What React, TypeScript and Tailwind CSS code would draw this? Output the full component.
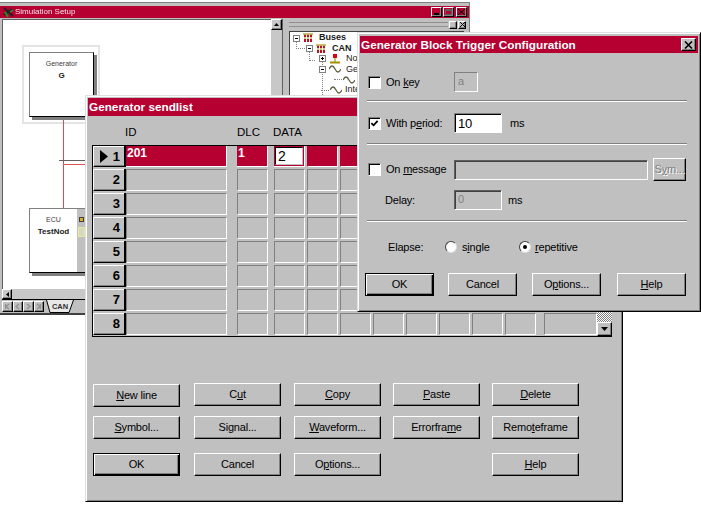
import React from 'react';

// 3d edges used all over the old Windows look
const raised = 'border border-t-white border-l-white border-r-black border-b-black shadow-[inset_-1px_-1px_0_#808080]';
const sunken = 'border border-t-[#808080] border-l-[#808080] border-r-white border-b-white shadow-[inset_1px_1px_0_#000]';

function Btn({ label, u, className = '', def = false }: { label: string; u?: string; className?: string; def?: boolean }) {
  const i = u ? label.indexOf(u) : -1;
  return (
    <div
      className={`h-[23px] flex items-center justify-center text-[11px] tracking-[-0.2px] leading-none text-black ${
        def ? 'border border-black shadow-[inset_1px_1px_0_#fff,inset_-1px_-1px_0_#000,inset_-2px_-2px_0_#808080]' : raised
      } ${className}`}
    >
      <span className="whitespace-pre">
        {i >= 0 ? (
          <>
            {label.slice(0, i)}
            <u className="underline underline-offset-1">{u}</u>
            {label.slice(i + 1)}
          </>
        ) : (
          label
        )}
      </span>
    </div>
  );
}

function Check({ on = false }: { on?: boolean }) {
  return (
    <div className={`w-[13px] h-[13px] bg-white shrink-0 flex items-center justify-center ${sunken}`}>
      {on && (
        <svg width="9" height="9" viewBox="0 0 10 10">
          <path d="M1.5 4.5 L4 7 L8.5 2" fill="none" stroke="#000" strokeWidth="2" />
        </svg>
      )}
    </div>
  );
}

function Radio({ on = false }: { on?: boolean }) {
  return (
    <div className="w-[12px] h-[12px] rounded-full bg-white border border-t-[#404040] border-l-[#404040] border-r-[#dfdfdf] border-b-[#dfdfdf] flex items-center justify-center">
      {on && <div className="w-[4px] h-[4px] rounded-full bg-black" />}
    </div>
  );
}

function Sep({ className = '' }: { className?: string }) {
  return <div className={`h-[2px] bg-white border-t border-[#808080] ${className}`} />;
}

// widths and gaps of the sendlist columns
const cols = [
  'w-[101px]',
  'ml-[10px] w-[31px]',
  'ml-[6px] w-[31px]',
  'ml-[2px] w-[31px]',
  'ml-[2px] w-[31px]',
  'ml-[2px] w-[31px]',
  'ml-[2px] w-[31px]',
  'ml-[2px] w-[31px]',
  'ml-[2px] w-[31px]',
  'ml-[2px] w-[31px]',
  'ml-[8px] w-[53px]',
];

function GridRow({ n, selected = false }: { n: number; selected?: boolean }) {
  return (
    <div className={`flex ${selected ? 'h-[21px]' : 'h-[22px] mt-[2px]'}`}>
      <div className="w-[31px] shrink-0 flex items-center justify-between pl-[6px] pr-[4px] font-bold text-[13px] border-t border-l border-t-white border-l-white border-b border-b-black shadow-[inset_0_-1px_0_#808080]">
        {selected ? (
          <svg width="8" height="13" viewBox="0 0 8 13">
            <path d="M0 0 L8 6.5 L0 13 Z" fill="#000" />
          </svg>
        ) : (
          <span />
        )}
        <span>{n}</span>
      </div>
      <div className="w-[2px] bg-black shrink-0" />
      {cols.map((c, i) => {
        if (selected && i < 3) {
          return (
            <div key={i} className={`${c} shrink-0 bg-[#b50031] border-r border-b border-white text-white font-bold text-[12px] leading-none ${i === 2 ? 'p-[1px]' : 'pl-[1px] pt-[1px]'}`}>
              {i === 0 && '201'}
              {i === 1 && '1'}
              {i === 2 && (
                <div className="h-full bg-white text-black font-normal text-[14px] border border-t-black border-l-black border-r-[#c0c0c0] border-b-[#c0c0c0] pl-[2px] pt-[1px]">2</div>
              )}
            </div>
          );
        }
        return (
          <div
            key={i}
            className={`${c} shrink-0 border ${selected ? 'bg-[#b50031] border-[#b50031] border-r-white border-b-white' : 'border-t-[#808080] border-l-[#808080] border-r-white border-b-white'}`}
          />
        );
      })}
    </div>
  );
}

function BusIcon() {
  return (
    <svg width="11" height="10" viewBox="0 0 11 10" className="shrink-0">
      <path d="M0 1 H10" stroke="#a08000" />
      <path d="M2 1 V8 M5 1 V8 M8 1 V8" stroke="#b08800" />
      <path d="M1 2 h2 v2 h-2z M4 2 h2 v2 h-2z M7 2 h2 v2 h-2z M1 6 h2 v3 h-2z M4 6 h2 v3 h-2z M7 6 h2 v3 h-2z" fill="#c01020" />
    </svg>
  );
}

function NodeIcon() {
  return (
    <svg width="12" height="10" viewBox="0 0 12 10" className="shrink-0">
      <path d="M6 4 V8" stroke="#808000" />
      <path d="M1 8.5 H11" stroke="#a09000" strokeWidth="2" />
      <rect x="4" y="0" width="4" height="4" fill="#e00010" />
    </svg>
  );
}

function WaveIcon() {
  return (
    <svg width="12" height="8" viewBox="0 0 12 8" className="shrink-0">
      <path d="M0 4 C2 0 4 0 6 4 S10 8 12 4" fill="none" stroke="#606040" strokeWidth="1.3" />
    </svg>
  );
}

function TreeBox({ plus = false }: { plus?: boolean }) {
  return (
    <div className="relative w-[7px] h-[7px] border border-[#808080] bg-white shrink-0">
      <div className="absolute left-[1px] top-[2px] w-[3px] h-[1px] bg-black" />
      {plus && <div className="absolute left-[2px] top-[1px] w-[1px] h-[3px] bg-black" />}
    </div>
  );
}

function Block({ className, kind, name, children, textClass = '' }: { className: string; kind: string; name: string; children?: React.ReactNode; textClass?: string }) {
  return (
    <div className={`absolute bg-white border border-t-[#808080] border-l-[#808080] border-r-black border-b-black shadow-[3px_3px_0_#808080] text-center ${className}`}>
      <div className={textClass}>
        <div className="pt-[5px] text-[7px] leading-[12px] text-[#404040]">{kind}</div>
        <div className="text-[8px] leading-[12px] font-bold text-[#202020]">{name}</div>
      </div>
      {children}
    </div>
  );
}

function SimulationWindow() {
  return (
    <div className="absolute left-0 top-[2px] w-[470px] h-[313px] bg-[#c0c0c0] border-t border-t-[#808080] border-r border-r-[#808080] border-b-2 border-b-[#404040] pt-[3px] flex flex-col">
      {/* title bar */}
      <div className="h-[12px] shrink-0 bg-[#b50031] flex items-center pl-[3px] pr-[2px]">
        <svg width="11" height="11" viewBox="0 0 11 11" className="shrink-0">
          <path d="M1 1 L10 9 M1 8 L9 2" stroke="#202020" strokeWidth="2" />
          <path d="M2 5 L5 10" stroke="#209020" strokeWidth="2" />
          <path d="M7 5 L10 3" stroke="#20a030" strokeWidth="1.5" />
        </svg>
        <span className="ml-[1px] text-[8px] leading-none text-white opacity-90">Simulation Setup</span>
        <div className="ml-auto flex gap-[1px] h-[10px]">
          <div className={`w-[11px] flex items-end justify-center pb-[1px] ${raised}`}><div className="w-[5px] h-[2px] bg-black" /></div>
          <div className={`w-[11px] flex items-center justify-center ${raised}`}><div className="w-[7px] h-[6px] border border-[#606060] border-t-2" /></div>
          <div className={`w-[11px] ml-[1px] flex items-center justify-center ${raised}`}>
            <svg width="7" height="6" viewBox="0 0 7 6"><path d="M0 0 L7 6 M7 0 L0 6" stroke="#000" /></svg>
          </div>
        </div>
      </div>
      <div className="flex-1 flex min-h-0 pl-[2px] pt-[1px]">
        {/* drawing area */}
        <div className="w-[280px] shrink-0 flex flex-col">
          <div className="flex-1 flex min-h-0">
            <div className="relative flex-1 bg-white border-l border-t border-[#606060]">
              <div className="absolute left-[19px] top-[25px] w-[78px] h-[79px] border-2 border-[#e4e4e4]" />
              <Block className="left-[26px] top-[32px] w-[65px] h-[65px]" kind="Generator" name="G" />
              <div className="absolute left-[60px] top-[100px] w-[1px] h-[88px] bg-[#e04858]" />
              <div className="absolute left-[56px] top-[140px] w-[30px] h-[1px] bg-[#606060]" />
              <div className="absolute left-[60px] top-[144px] w-[30px] h-[1px] bg-[#e05050]" />
              <Block className="left-[26px] top-[188px] w-[65px] h-[65px]" kind="ECU" name="TestNod" textClass="pr-[16px]">
                <div className="absolute right-0 top-0 bottom-0 w-[16px] bg-[#c0c0c0]">
                  <div className="absolute left-[2px] top-[8px] w-[5px] h-[5px] bg-[#d8b020] border border-[#404040]" />
                  <div className="absolute left-[1px] top-[18px] w-[7px] h-[10px] bg-[#d8d8c0] border border-[#e8e8a0]" />
                </div>
              </Block>
            </div>
            <div className="w-[11px] shrink-0 flex flex-col bg-[#c8c8c8]">
              <div className={`h-[11px] flex items-center justify-center ${raised}`}>
                <svg width="5" height="3" viewBox="0 0 5 3"><path d="M2.5 0 L5 3 H0 Z" fill="#000" /></svg>
              </div>
            </div>
          </div>
          <div className="h-[10px] shrink-0 flex bg-[#c8c8c8]">
            <div className={`w-[10px] flex items-center justify-center ${raised}`}>
              <svg width="3" height="5" viewBox="0 0 3 5"><path d="M0 2.5 L3 0 V5 Z" fill="#000" /></svg>
            </div>
          </div>
          <div className="h-[14px] shrink-0 flex items-center border-t border-black">
            {['M4 1 L1 3.5 L4 6 M0.5 1 V6', 'M4 1 L1 3.5 L4 6', 'M1 1 L4 3.5 L1 6', 'M1 1 L4 3.5 L1 6 M4.5 1 V6'].map((d, i) => (
              <div key={i} className={`w-[10.5px] h-[11px] flex items-center justify-center ${raised}`}>
                <svg width="5" height="7" viewBox="0 0 5 7"><path d={d} fill="none" stroke="#909090" strokeWidth="1.4" /></svg>
              </div>
            ))}
            <div className="relative ml-[2px] h-[13px] w-[28px] flex items-center justify-center text-[7.5px] font-bold text-[#303030]">
              <svg className="absolute inset-0" width="28" height="13" viewBox="0 0 28 13">
                <path d="M0.5 0 L4 12.5 H23 L27.5 0" fill="#e8e8e8" stroke="#000" />
              </svg>
              <span className="relative">CAN</span>
            </div>
          </div>
        </div>
        <div className="w-[7px] shrink-0 border-l border-[#606060]" />
        {/* bus tree */}
        <div className="flex-1 flex flex-col pr-[3px] min-w-0">
          <div className="h-[9px] mt-[1px] shrink-0 flex items-center gap-[1px]">
            <div className="flex-1 h-[5px] border-y border-[#909090]" />
            <div className={`w-[8px] h-[8px] ${raised}`} />
            <div className={`w-[8px] h-[8px] flex items-center justify-center ${raised}`}>
              <svg width="5" height="5" viewBox="0 0 5 5"><path d="M0 0 L5 5 M5 0 L0 5" stroke="#000" /></svg>
            </div>
          </div>
          <div className="relative flex-1 mt-[2px] mr-[2px] bg-white border-l border-t border-[#404040] pl-[3px] pt-[1px] text-[9px] text-[#202020] overflow-hidden">
            {/* dotted tree connectors */}
            <div className="absolute left-[6px] top-[9px] h-[8px] w-[13px] border-l border-b border-dotted border-[#808080]" />
            <div className="absolute left-[19px] top-[19px] h-[10px] w-[6px] border-l border-b border-dotted border-[#808080]" />
            <div className="absolute left-[32px] top-[27px] h-[40px] border-l border-dotted border-[#808080]" />
            <div className="h-[10.4px] flex items-center gap-[3px]"><TreeBox /><BusIcon /><b className="ml-[2px]">Buses</b></div>
            <div className="h-[10.4px] flex items-center gap-[3px] pl-[13px]"><TreeBox /><BusIcon /><b className="ml-[2px]">CAN</b></div>
            <div className="h-[10.4px] flex items-center gap-[3px] pl-[26px]"><TreeBox plus /><NodeIcon /><span className="ml-[2px]">Node</span></div>
            <div className="h-[10.4px] flex items-center gap-[3px] pl-[26px]"><TreeBox /><WaveIcon /><span className="ml-[2px]">Generators</span></div>
            <div className="h-[10.4px] flex items-center pl-[41px]"><div className="w-[8px] border-t border-dotted border-[#808080] mr-[1px]" /><WaveIcon /></div>
            <div className="h-[10.4px] flex items-center pl-[28px]"><div className="w-[8px] border-t border-dotted border-[#808080] mr-[1px]" /><WaveIcon /><span className="ml-[3px]">Interactive</span></div>
          </div>
        </div>
      </div>
    </div>
  );
}

function SendlistWindow() {
  return (
    <div className="absolute left-[85px] top-[95px] w-[538px] h-[407px] bg-[#c0c0c0] border border-t-[#dfdfdf] border-l-[#dfdfdf] border-r-black border-b-black shadow-[inset_1px_1px_0_#fff,inset_-1px_-1px_0_#808080] p-[2px] flex flex-col text-black">
      <div className="h-[18px] shrink-0 bg-[#b50031] text-white font-bold text-[11.75px] leading-[18px] pl-[1px]">Generator sendlist</div>
      <div className="pl-[37px] h-[29px] pt-[9px] flex text-[11.5px] leading-[14px] shrink-0">
        <span className="w-[112px]">ID</span>
        <span className="w-[36px]">DLC</span>
        <span>DATA</span>
      </div>
      <div className="ml-[4px] w-[520px] h-[192px] shrink-0 flex border-l border-t border-b border-black">
        <div className="flex-1 min-w-0">
          <GridRow n={1} selected />
          {[2, 3, 4, 5, 6, 7, 8].map((n) => (
            <GridRow key={n} n={n} />
          ))}
        </div>
        <div className="w-[15px] shrink-0 flex flex-col justify-end bg-[repeating-conic-gradient(#808080_0_25%,#ffffff_0_50%)] bg-[length:2px_2px]">
          <div className={`h-[14px] bg-[#c0c0c0] flex items-center justify-center ${raised}`}>
            <svg width="7" height="4" viewBox="0 0 7 4"><path d="M0 0 H7 L3.5 4 Z" fill="#000" /></svg>
          </div>
        </div>
      </div>
      <div className="mt-[46px] ml-[5px] grid grid-cols-[101px_100px_99px_99px_87px] [&>*]:w-[87px]">
        <Btn label="New line" u="N" className="mt-[1px]" />
        <Btn label="Cut" u="u" />
        <Btn label="Copy" u="C" />
        <Btn label="Paste" u="P" />
        <Btn label="Delete" u="D" />
        <Btn label="Symbol..." u="S" className="mt-[9px]" />
        <Btn label="Signal..." u="g" className="mt-[9px]" />
        <Btn label="Waveform..." u="W" className="mt-[9px]" />
        <Btn label="Errorframe" u="m" className="mt-[9px]" />
        <Btn label="Remoteframe" u="t" className="mt-[9px]" />
        <Btn label="OK" def className="mt-[14px]" />
        <Btn label="Cancel" className="mt-[14px]" />
        <Btn label="Options..." u="p" className="mt-[14px]" />
        <div />
        <Btn label="Help" u="H" className="mt-[14px]" />
      </div>
    </div>
  );
}

function TriggerDialog() {
  return (
    <div className="absolute left-[357px] top-[32px] w-[344px] h-[280px] bg-[#c0c0c0] border border-t-[#dfdfdf] border-l-[#dfdfdf] border-r-black border-b-black shadow-[inset_1px_1px_0_#fff,inset_-1px_-1px_0_#808080] p-[2px] pt-[3px] flex flex-col text-black text-[11px] tracking-[-0.2px] leading-none">
      <div className="h-[17px] shrink-0 bg-[#b50031] flex items-center pl-[1px] pr-[2px]">
        <span className="text-white font-bold text-[11.75px] tracking-normal">Generator Block Trigger Configuration</span>
        <div className={`ml-auto w-[15px] h-[13px] bg-[#c0c0c0] flex items-center justify-center ${raised}`}>
          <svg width="9" height="8" viewBox="0 0 9 8"><path d="M1 0.5 L8 7.5 M8 0.5 L1 7.5" stroke="#000" strokeWidth="1.6" /></svg>
        </div>
      </div>
      <div className="pl-[7px] pr-[11px] flex flex-col">
        <div className="mt-[19px] flex items-center h-[20px] pl-[1px]">
          <Check />
          <span className="ml-[5px] w-[68px]">On <u className="underline-offset-1">k</u>ey</span>
          <div className="w-[24px] h-[20px] pl-[3px] pt-[3px] text-[#808080] border border-t-[#808080] border-l-[#808080] border-r-white border-b-white">a</div>
        </div>
        <Sep className="mt-[8px]" />
        <div className="mt-[11px] flex items-center h-[20px] pl-[1px]">
          <Check on />
          <span className="ml-[5px] w-[68px]">With p<u className="underline-offset-1">e</u>riod:</span>
          <div className={`w-[48px] h-[20px] bg-white pl-[3px] pt-[3px] text-[13px] ${sunken}`}>10</div>
          <span className="ml-[8px]">ms</span>
        </div>
        <Sep className="mt-[10px]" />
        <div className="mt-[13px] flex items-center h-[23px] pl-[1px]">
          <Check />
          <span className="ml-[5px] w-[68px] whitespace-nowrap">On <u className="underline-offset-1">m</u>essage</span>
          <div className="w-[194px] h-[20px] border border-t-[#606060] border-l-[#606060] border-r-white border-b-white shadow-[inset_1px_1px_0_#404040]" />
          <div className={`ml-[5px] w-[33px] h-[23px] flex items-center justify-center text-[#808080] ${raised}`}><span className="[text-shadow:1px_1px_0_#fff]">S<u>y</u>m...</span></div>
        </div>
        <div className="mt-[9px] flex items-center h-[20px] pl-[18px]">
          <span className="w-[69px]">Delay:</span>
          <div className="w-[48px] h-[20px] pl-[3px] pt-[3px] text-[#808080] border border-t-[#606060] border-l-[#606060] border-r-white border-b-white shadow-[inset_1px_1px_0_#404040]">0</div>
          <span className="ml-[6px]">ms</span>
        </div>
        <Sep className="mt-[10px]" />
        <div className="mt-[18px] flex items-center h-[14px] pl-[21px]">
          <span className="w-[57px]">Elapse:</span>
          <Radio />
          <span className="ml-[5px] w-[57px]">s<u className="underline-offset-1">i</u>ngle</span>
          <Radio on />
          <span className="ml-[4px]"><u className="underline-offset-1">r</u>epetitive</span>
        </div>
        <div className="mt-[19px] -ml-[2px] flex">
          <Btn label="OK" def className="w-[69px]" />
          <Btn label="Cancel" className="ml-[14px] w-[69px]" />
          <Btn label="Options..." u="p" className="ml-[15px] w-[69px]" />
          <Btn label="Help" u="H" className="ml-[16px] w-[69px]" />
        </div>
      </div>
    </div>
  );
}

export default function App() {
  return (
    <div className="relative w-[701px] h-[507px] overflow-hidden bg-white font-['Liberation_Sans',Arial,sans-serif]">
      <SimulationWindow />
      <SendlistWindow />
      <TriggerDialog />
    </div>
  );
}
